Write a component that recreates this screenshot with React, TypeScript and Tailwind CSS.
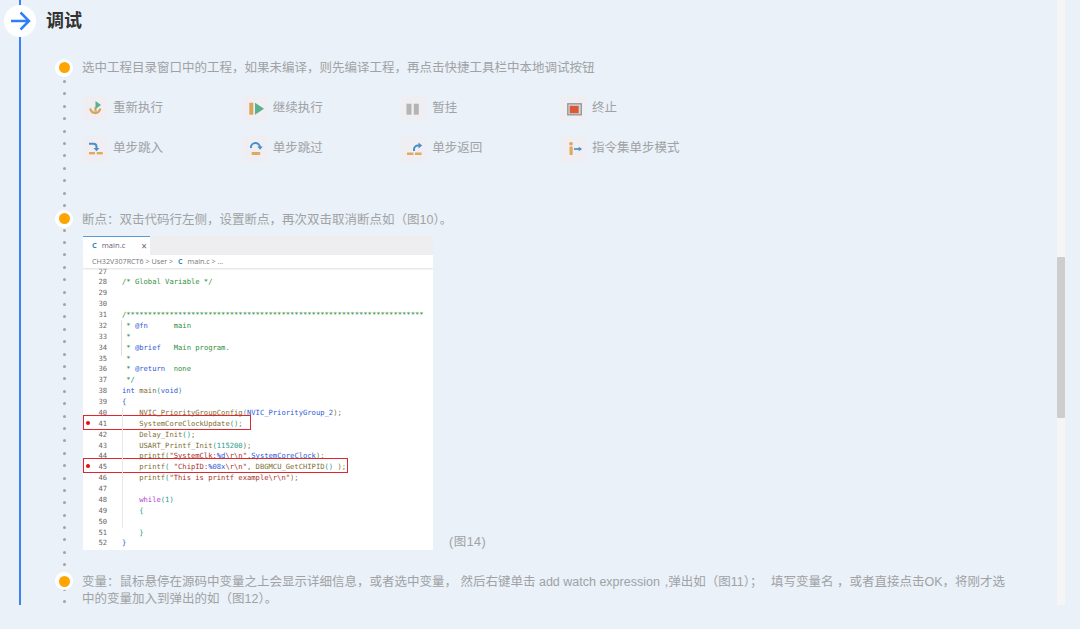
const FONT = "font-['Liberation_Sans','Noto_Sans_CJK_SC',sans-serif]";

function Tile({ children }: { children: React.ReactNode }) {
  return (
    <div className="w-[26px] h-[26px] bg-[#efeff3] shrink-0">
      <svg width="26" height="26" viewBox="0 0 26 26" fill="none">{children}</svg>
    </div>
  );
}

const icons: Record<string, React.ReactNode> = {
  restart: (
    <>
      <path d="M8.500 14.500a5 5 0 0 0 9.500 0" stroke="#d9a55a" strokeWidth="2.400" strokeLinecap="round" />
      <path d="M13.500 16.500V12" stroke="#d9a55a" strokeWidth="2.200" />
      <path d="M13.500 6l5.500 4-5.500 4z" fill="#58b090" />
    </>
  ),
  resume: (
    <>
      <rect x="7.300" y="7.700" width="4" height="12" fill="#d9a55a" />
      <path d="M13 7.700l9 6-9 6z" fill="#58b090" />
    </>
  ),
  pause: (
    <>
      <rect x="5.500" y="8.700" width="5" height="11" fill="#b4b4b4" />
      <rect x="12.800" y="8.700" width="5" height="11" fill="#b4b4b4" />
    </>
  ),
  stop: (
    <>
      <rect x="6.800" y="8.800" width="13.500" height="11" fill="#d8d8d8" stroke="#999" strokeWidth="1.400" />
      <rect x="8.700" y="10.800" width="9" height="7.500" fill="#d95a38" />
    </>
  ),
  into: (
    <>
      <path d="M7 7.700h4.500a3 3 0 0 1 3 3V13" stroke="#4a8fcc" strokeWidth="2" />
      <path d="M11.500 12l3 3.200 3-3.200z" fill="#4a8fcc" />
      <rect x="7" y="16" width="6" height="2.400" fill="#e2a95c" />
      <rect x="14.700" y="16" width="6" height="2.400" fill="#e2a95c" />
    </>
  ),
  over: (
    <>
      <path d="M9 12a4.500 4.500 0 0 1 9-1" stroke="#4a8fcc" strokeWidth="2" />
      <path d="M15.300 10.500h5.500l-2.700 3.300z" fill="#4a8fcc" />
      <rect x="9.700" y="16" width="8.500" height="3" fill="#e2a95c" />
    </>
  ),
  ret: (
    <>
      <path d="M13 15v-1.500A4 4 0 0 1 17 9.500h1" stroke="#4a8fcc" strokeWidth="2" />
      <path d="M17.500 6.500l3.700 3-3.700 3z" fill="#4a8fcc" />
      <rect x="6" y="16.500" width="6.500" height="2.500" fill="#e2a95c" />
      <rect x="14" y="16.500" width="6.500" height="2.500" fill="#e2a95c" />
    </>
  ),
  inst: (
    <>
      <rect x="8" y="6" width="4" height="3.500" rx="1.700" fill="#e2a95c" />
      <rect x="8.500" y="10.500" width="3.200" height="8.500" fill="#e2a95c" />
      <path d="M13 13h5" stroke="#4a8fcc" strokeWidth="1.700" />
      <path d="M17.700 10.800l3.500 2.200-3.500 2.200z" fill="#4a8fcc" />
    </>
  ),
};

const rows = [
  [["restart", "重新执行"], ["resume", "继续执行"], ["pause", "暂挂"], ["stop", "终止"]],
  [["into", "单步跳入"], ["over", "单步跳过"], ["ret", "单步返回"], ["inst", "指令集单步模式"]],
];

function Marker({ className = "top-[-0.5px]" }: { className?: string }) {
  return (
    <span className={`absolute left-[-27px] ${className} w-[18px] h-[18px] rounded-full bg-white flex items-center justify-center`}>
      <span className="w-[11px] h-[11px] rounded-full bg-[#ffa500]" />
    </span>
  );
}

const G = "text-[#2f8f3c]";
const B = "text-[#2f5bd8]";
const R = "text-[#a8322a]";
const Y = "text-[#7d6f34]";
const P = "text-[#b040d0]";
const T = "text-[#2a9a8a]";

type Seg = [string, string?];
const code: [number, Seg[]][] = [
  [27, []],
  [28, [["/* Global Variable */", G]]],
  [29, []],
  [30, []],
  [31, [["/*********************************************************************", G]]],
  [32, [[" * ", G], ["@fn", B], ["      main", G]]],
  [33, [[" *", G]]],
  [34, [[" * ", G], ["@brief", B], ["   Main program.", G]]],
  [35, [[" *", G]]],
  [36, [[" * ", G], ["@return", B], ["  none", G]]],
  [37, [[" */", G]]],
  [38, [["int ", B], ["main", Y], ["(", T], ["void", B], [")", T]]],
  [39, [["{", B]]],
  [40, [["    NVIC_PriorityGroupConfig", Y], ["(", T], ["NVIC_PriorityGroup_2", B], [");", Y]]],
  [41, [["    SystemCoreClockUpdate", Y], ["()", T], [";", Y]]],
  [42, [["    Delay_Init", Y], ["()", T], [";", Y]]],
  [43, [["    USART_Printf_Init", Y], ["(", T], ["115200", T], [");", Y]]],
  [44, [["    printf", Y], ["(", T], ["\"SystemClk:", R], ["%d", B], ["\\r\\n\"", R], [",", Y], ["SystemCoreClock", B], [");", Y]]],
  [45, [["    printf", Y], ["( ", T], ["\"ChipID:", R], ["%08x", B], ["\\r\\n\"", R], [", DBGMCU_GetCHIPID", Y], ["() ", T], [");", Y]]],
  [46, [["    printf", Y], ["(", T], ["\"This is printf example\\r\\n\"", R], [");", Y]]],
  [47, []],
  [48, [["    ", Y], ["while", P], ["(1)", T]]],
  [49, [["    {", T]]],
  [50, []],
  [51, [["    }", T]]],
  [52, [["}", B]]],
];

const line1 = "选中工程目录窗口中的工程\uFF0C如果未编译\uFF0C则先编译工程\uFF0C再点击快捷工具栏中本地调试按钮";
const line2 = "断点\uFF1A双击代码行左侧\uFF0C设置断点\uFF0C再次双击取消断点如\uFF08图10\uFF09。";
const line3a = "变量\uFF1A鼠标悬停在源码中变量之上会显示详细信息\uFF0C或者选中变量\uFF0C 然后右键单击 add watch expression";
const line3b = ",弹出如\uFF08图11\uFF09\uFF1B ";
const line3c = "填写变量名 \uFF0C或者直接点击OK\uFF0C将刚才选中的变量加入到弹出的如\uFF08图12\uFF09。";

function CodeShot() {
  return (
    <div className="relative w-[350px] h-[314px] bg-white overflow-hidden shrink-0">
      <div className="h-[19px] bg-[#eeeef0] flex">
        <div className="w-[67px] bg-white border-t border-[#5b9bd5] flex items-center pl-[9px] font-['Open_Sans',sans-serif] text-[7.600px] text-[#6a5a7a]">
          <span className="text-[#3a86b8] font-bold mr-[5px]">C</span>
          main.c
          <span className="ml-[16px] text-[10px] leading-none text-[#666]">×</span>
        </div>
      </div>
      <div className="h-[13px] flex items-center pl-[9px] font-['Open_Sans',sans-serif] text-[7.200px] text-[#777] shadow-[0_1px_2px_#ddd] relative whitespace-pre">
        CH32V307RCT6 &gt; User &gt; <span className="text-[#3a86b8] font-bold mx-[3px]">C</span> main.c &gt; ...
      </div>
      <div className="mt-[-1px] font-['DejaVu_Sans_Mono',monospace] text-[7.170px] leading-[10.875px] whitespace-pre">
        {code.map(([n, segs]) => (
          <div key={n} className="flex h-[10.875px]">
            <span className="w-[24px] text-right text-[#666]">{n}</span>
            <span className="ml-[15px]">
              {segs.map((s, i) => (
                <span key={i} className={s[1]}>{s[0]}</span>
              ))}
            </span>
          </div>
        ))}
      </div>
      <span className="absolute left-[3px] top-[185px] w-[4px] h-[4px] rounded-full bg-[#e3100c]" />
      <span className="absolute left-[3px] top-[228px] w-[4px] h-[4px] rounded-full bg-[#e3100c]" />
      <span className="absolute left-0 top-[179px] w-[168px] h-[15px] border border-[#e2272c]" />
      <span className="absolute left-0 top-[222px] w-[265px] h-[15px] border border-[#e2272c]" />
      <span className="absolute left-[38px] top-[84px] w-px h-[36px] bg-[#ddd]" />
      <span className="absolute left-[39px] top-[172px] w-px h-[120px] bg-[#e8e8e8]" />
    </div>
  );
}

export default function App() {
  return (
    <div className={`${FONT} relative w-[1080px] h-[629px] bg-[#eaf1f8] overflow-hidden`}>
      <div className="relative w-[1057px] h-[605px] overflow-hidden">
        {/* blue line */}
        <div className="absolute left-[19px] top-0 bottom-0 w-[2px] bg-[#3b82f6]" />
        {/* dotted rail */}
        <div className="absolute left-[62.500px] top-[80px] flex flex-col gap-[9.400px]">
          {Array.from({ length: 43 }).map((_, i) => (
            <span key={i} className="block w-[3px] h-[3px] rounded-full bg-[#a0a3a8]" />
          ))}
        </div>

        {/* header */}
        <div className="relative flex items-center h-[32px] mt-[5px] ml-[4px] gap-[10px]">
          <div className="w-[32px] h-[32px] rounded-full bg-white flex items-center justify-center">
            <svg width="22" height="22" viewBox="0 0 22 22" fill="none">
              <path d="M2 11h18M11.500 2.500 20 11l-8.500 8.500" stroke="#2f80f5" strokeWidth="2.500" />
            </svg>
          </div>
          <h2 className="text-[18px] font-bold text-[#333]">调试</h2>
        </div>

        <div className="relative ml-[82px] text-[12.500px] text-[#a0a2a5]">
          <p className="relative mt-[22px] leading-[18px]">
            <Marker />
            {line1}
          </p>
          <div className="mt-[18px] flex flex-col gap-[14.500px]">
            {rows.map((row, i) => (
              <div key={i} className="flex">
                {row.map(([icon, label]) => (
                  <div key={label} className="w-[159.670px] flex items-center gap-[5px]">
                    <Tile>{icons[icon]}</Tile>
                    <span>{label}</span>
                  </div>
                ))}
              </div>
            ))}
          </div>
          <p className="relative mt-[49px] leading-[18px]">
            <Marker className="top-[-1px]" />
            {line2}
          </p>
          <div className="mt-[7px] ml-[1px] flex items-end">
            <CodeShot />
            <span className="ml-[16px] mb-[-1px] leading-[18px] tracking-[0.500px]">(图14)</span>
          </div>
          <p className="relative mt-[24px] leading-[17.500px] w-[925px]">
            <Marker className="top-[-1.500px]" />
            {line3a}
            <span className="inline-block w-[5px]" />
            {line3b}
            <span className="inline-block w-[5px]" />
            {line3c}
          </p>
        </div>
      </div>
      {/* scrollbar */}
      <div className="absolute left-[1057px] top-0 w-[8px] h-[605px] bg-[#f5f5f6]">
        <div className="absolute top-[257px] w-[8px] h-[161px] rounded-[1px] bg-[#cdcdcd]" />
      </div>
    </div>
  );
}
